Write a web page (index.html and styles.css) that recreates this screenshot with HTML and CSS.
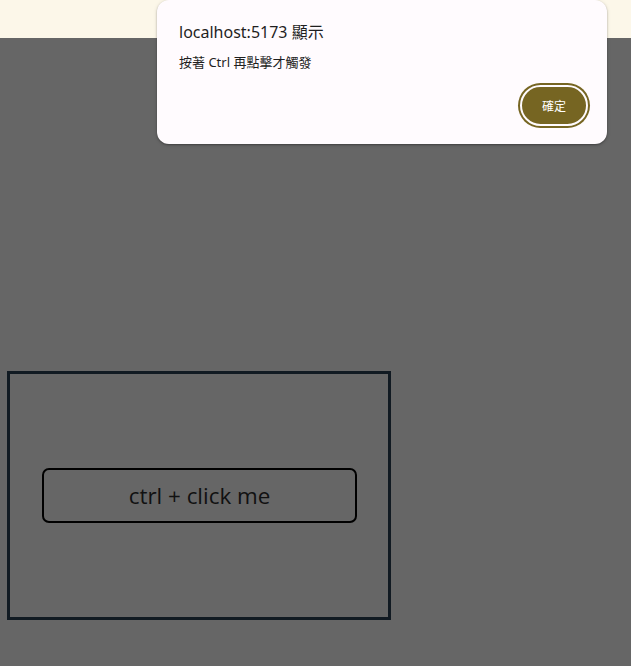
FILE: index.html
```html
<!DOCTYPE html>
<html lang="zh-Hant">
<head>
<meta charset="utf-8">
<title>ctrl click</title>
<link rel="stylesheet" href="styles.css">
</head>
<body>
  <div class="topbar"></div>
  <main class="page">
    <div class="frame">
      <button class="ctrl-btn" type="button">ctrl + click me</button>
    </div>
  </main>
  <div class="dialog" role="alertdialog">
    <div class="dialog-title">localhost:5173 顯示</div>
    <div class="dialog-msg">按著 Ctrl 再點擊才觸發</div>
    <div class="dialog-actions">
      <button class="ok-btn" type="button">確定</button>
    </div>
  </div>
</body>
</html>
```

FILE: styles.css
```css
html, body {
  margin: 0;
  padding: 0;
  height: 100%;
}
body {
  background: #666666;
  font-family: "Noto Sans", "Noto Sans CJK TC", sans-serif;
  overflow: hidden;
}
.topbar {
  height: 38px;
  background: #fcf7e9;
}
.page {
  padding: 333px 0 0 7px;
}
.frame {
  box-sizing: border-box;
  width: 384px;
  height: 249px;
  border: 3px solid #111a22;
  display: flex;
  align-items: center;
  padding: 0 31px 0 32px;
}
.ctrl-btn {
  box-sizing: border-box;
  width: 100%;
  height: 55px;
  background: transparent;
  border: 2px solid #000;
  border-radius: 7px;
  font-family: "Open Sans", "Noto Sans", sans-serif;
  font-size: 22.4px;
  color: #111;
  padding: 0;
}
.dialog {
  position: absolute;
  left: 157px;
  top: 0;
  width: 450px;
  height: 144px;
  box-sizing: border-box;
  background: #fffbfe;
  border-radius: 12px;
  box-shadow: 0 1px 2px rgba(0,0,0,0.3), 0 1px 4px rgba(0,0,0,0.12);
  padding: 20px 19px 0 22px;
}
.dialog-title {
  font-size: 16px;
  line-height: 24px;
  color: #1f1f1f;
}
.dialog-msg {
  margin-top: 9px;
  font-size: 13px;
  line-height: 18px;
  color: #1f1f1f;
}
.dialog-actions {
  display: flex;
  justify-content: flex-end;
  margin-top: 14px;
}
.ok-btn {
  box-sizing: border-box;
  width: 68px;
  height: 41px;
  border-radius: 21px;
  background: #766522;
  border: 2px solid #fffbfe;
  box-shadow: 0 0 0 2px #766522;
  outline: none;
  color: #fff;
  font-family: "Noto Sans CJK TC", sans-serif;
  font-size: 12px;
  padding: 0;
}
```
